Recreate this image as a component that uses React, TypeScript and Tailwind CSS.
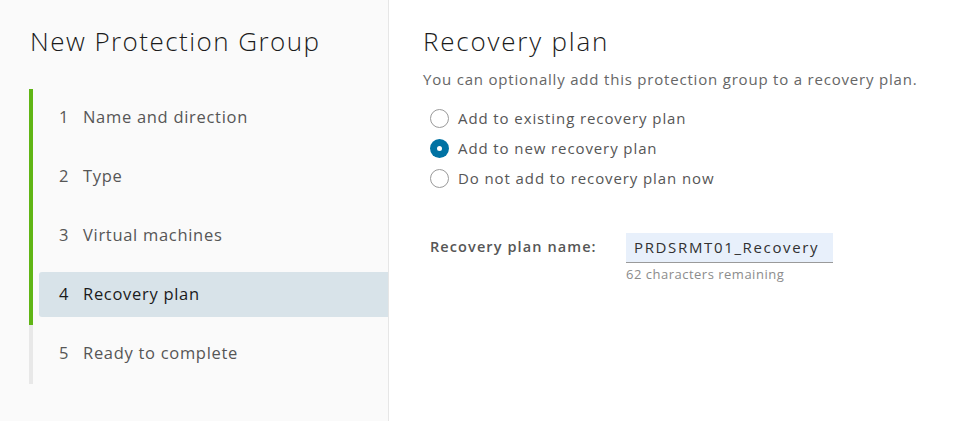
export default function App() {
  const steps = [
    { n: 1, label: 'Name and direction', done: true },
    { n: 2, label: 'Type', done: true },
    { n: 3, label: 'Virtual machines', done: true },
    { n: 4, label: 'Recovery plan', done: true, active: true },
    { n: 5, label: 'Ready to complete', done: false },
  ];

  const options = [
    { label: 'Add to existing recovery plan', checked: false },
    { label: 'Add to new recovery plan', checked: true },
    { label: 'Do not add to recovery plan now', checked: false },
  ];

  return (
    <div
      className="flex h-[421px] w-[977px] bg-white text-[#313131]"
      style={{ fontFamily: '"Open Sans", Inter, sans-serif' }}
    >
      {/* wizard steps */}
      <aside className="flex w-[389px] shrink-0 flex-col border-r border-[#e6e6e6] bg-[#fafafa]">
        <h1 className="ml-[30px] mt-[23px] text-[26px] font-light leading-[36px] tracking-[1.45px] text-[#1b1b1b]">
          New Protection Group
        </h1>
        <ul className="ml-[29px] mt-[30px]">
          {steps.map((s) => (
            <li
              key={s.n}
              className={`flex h-[59px] border-l-4 pt-[6px] ${s.done ? 'border-[#60b515]' : 'border-[#e8e8e8]'}`}
            >
              <div
                className={`ml-[6px] flex h-[45px] flex-1 items-center rounded-l-[3px] pl-[20px] text-[16.5px] tracking-[0.7px] ${
                  s.active ? 'bg-[#d8e3e9] text-[#1b1b1b]' : 'text-[#565656]'
                }`}
              >
                <span className="w-[24px]">{s.n}</span>
                <span>{s.label}</span>
              </div>
            </li>
          ))}
        </ul>
      </aside>

      {/* page content */}
      <main className="flex-1 pl-[34px]">
        <h2 className="mt-[23px] text-[26px] font-light leading-[36px] tracking-[1.8px] text-[#1b1b1b]">
          Recovery plan
        </h2>
        <p className="mt-[9px] text-[15px] leading-[22px] tracking-[0.8px] text-[#666666]">
          You can optionally add this protection group to a recovery plan.
        </p>

        <div className="ml-[7px] mt-[13px] flex flex-col">
          {options.map((o) => (
            <label
              key={o.label}
              className="flex h-[30px] items-center gap-[9px] text-[15px] tracking-[0.9px] text-[#565656]"
            >
              {o.checked ? (
                <span className="flex h-[19px] w-[19px] items-center justify-center rounded-full bg-[#0072a3]">
                  <span className="h-[5px] w-[5px] rounded-full bg-white" />
                </span>
              ) : (
                <span className="h-[19px] w-[19px] rounded-full border border-[#9a9a9a] bg-white" />
              )}
              <span>{o.label}</span>
            </label>
          ))}
        </div>

        <div className="ml-[7px] mt-[40px] flex">
          <span className="mt-[3px] w-[196px] text-[14.5px] font-semibold tracking-[1.1px] text-[#565656]">
            Recovery plan name:
          </span>
          <div className="flex flex-col">
            <div className="flex h-[30px] w-[207px] items-center border-b border-[#9a9a9a] bg-[#e8f0fb] pl-[8px] text-[15px] tracking-[1.65px] text-[#313131]">
              PRDSRMT01_Recovery
            </div>
            <span className="mt-[2px] text-[13px] tracking-[0.5px] text-[#8c8c8c]">62 characters remaining</span>
          </div>
        </div>
      </main>
    </div>
  );
}
